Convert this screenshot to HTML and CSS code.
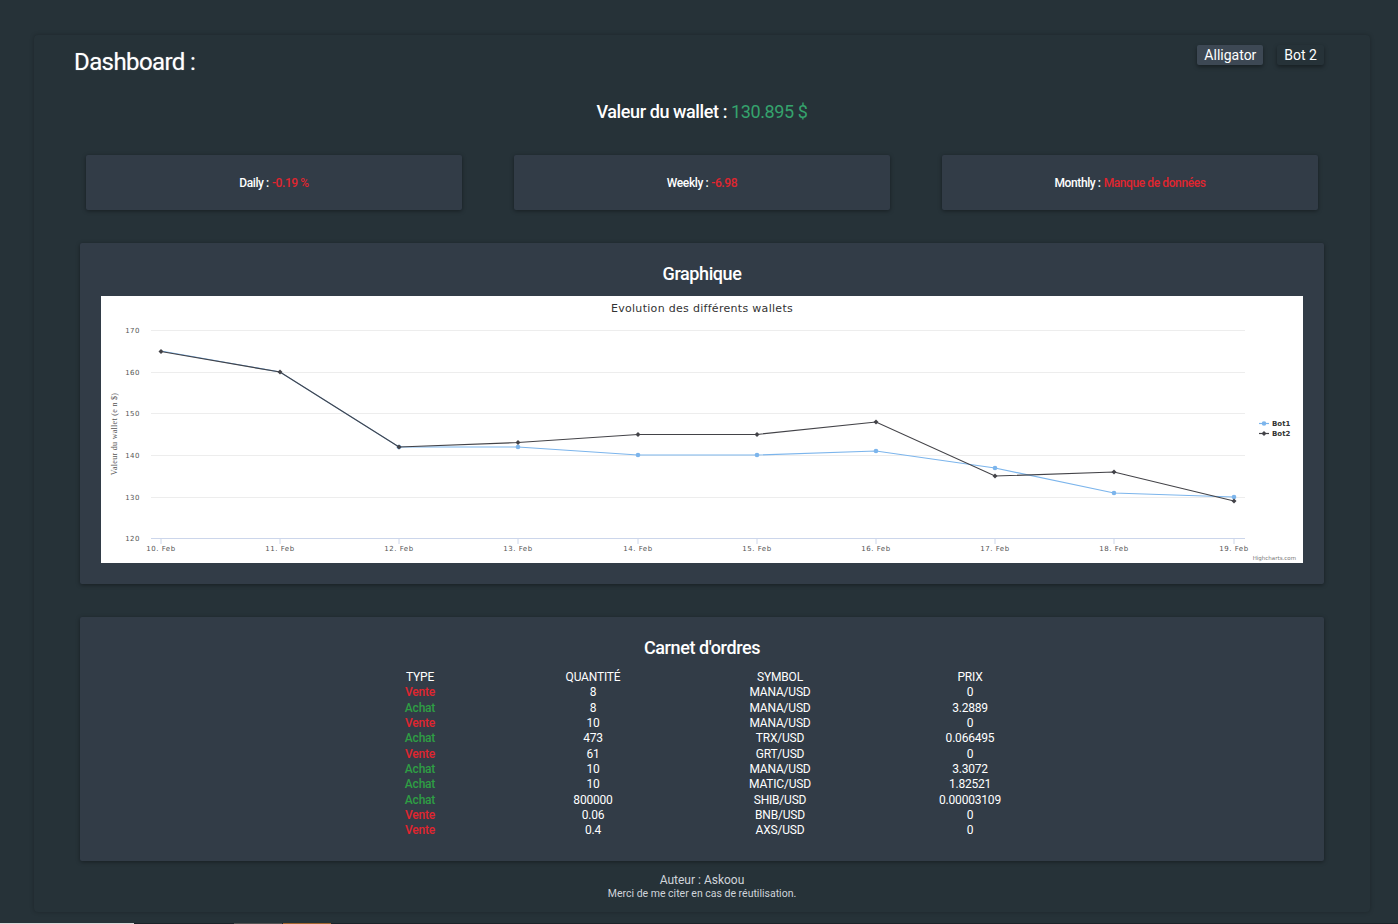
FILE: index.html
```html
<!DOCTYPE html>
<html lang="fr">
<head>
  <meta charset="UTF-8">
  <meta name="viewport" content="width=device-width, initial-scale=1.0">
  <title>Dashboard</title>
  <link rel="stylesheet" href="styles.css">
</head>
<body>

  <div class="page">
    <div class="card">
      <div class="header">
        <h1>Dashboard :</h1>
        <div class="tabs">
          <button class="tab active">Alligator</button>
          <button class="tab">Bot 2</button>
        </div>
      </div>

      <h2 class="wallet">Valeur du wallet : <span class="money">130.895 $</span></h2>

      <div class="stats">
        <div class="stat">Daily : <span class="red">-0.19 %</span></div>
        <div class="stat">Weekly : <span class="red">-6.98</span></div>
        <div class="stat">Monthly : <span class="red">Manque de données</span></div>
      </div>

      <div class="section chart-section">
        <h3>Graphique</h3>
        <svg class="chart" width="1202" height="267" viewBox="0 0 1202 267">
          <rect width="1202" height="267" fill="#fff"/>
          <text class="chart-title" x="601" y="16" text-anchor="middle">Evolution des différents wallets</text>

          <g class="grid">
            <path d="M50 34.500H1144"/>
            <path d="M50 76.500H1144"/>
            <path d="M50 117.500H1144"/>
            <path d="M50 159.500H1144"/>
            <path d="M50 201.500H1144"/>
          </g>
          <path class="axis" d="M50 242.500H1144"/>
          <path class="axis" d="M60 243v5M179 243v5M298 243v5M417 243v5M537 243v5M656 243v5M775 243v5M894 243v5M1013 243v5M1133 243v5"/>

          <g class="ylabels">
            <text x="39" y="37">170</text>
            <text x="39" y="79">160</text>
            <text x="39" y="120">150</text>
            <text x="39" y="162">140</text>
            <text x="39" y="204">130</text>
            <text x="39" y="245">120</text>
          </g>
          <g class="xlabels">
            <text x="60" y="255">10. Feb</text>
            <text x="179" y="255">11. Feb</text>
            <text x="298" y="255">12. Feb</text>
            <text x="417" y="255">13. Feb</text>
            <text x="537" y="255">14. Feb</text>
            <text x="656" y="255">15. Feb</text>
            <text x="775" y="255">16. Feb</text>
            <text x="894" y="255">17. Feb</text>
            <text x="1013" y="255">18. Feb</text>
            <text x="1133" y="255">19. Feb</text>
          </g>
          <text class="ytitle" transform="translate(16 138) rotate(-90)" text-anchor="middle">Valeur du wallet (e n $)</text>

          <polyline class="bot1" points="60,55 179,76 298,151 417,151 537,159 656,159 775,155 894,172 1013,197 1133,201"/>
          <g class="bot1-dots">
            <circle cx="298" cy="151" r="2.300"/><circle cx="417" cy="151" r="2.300"/>
            <circle cx="537" cy="159" r="2.300"/><circle cx="656" cy="159" r="2.300"/>
            <circle cx="775" cy="155" r="2.300"/><circle cx="894" cy="172" r="2.300"/>
            <circle cx="1013" cy="197" r="2.300"/><circle cx="1133" cy="201" r="2.300"/>
          </g>
          <polyline class="bot2" points="60,55.500 179,76 298,151 417,146.500 537,138.500 656,138.500 775,126 894,180 1013,176 1133,205"/>
          <g class="bot2-dots">
            <path d="M60 53l2.500 2.500-2.500 2.500-2.500-2.500z"/><path d="M179 73.500l2.500 2.500-2.500 2.500-2.500-2.500z"/>
            <path d="M298 148.500l2.500 2.500-2.500 2.500-2.500-2.500z"/><path d="M417 144l2.500 2.500-2.500 2.500-2.500-2.500z"/>
            <path d="M537 136l2.500 2.500-2.500 2.500-2.500-2.500z"/><path d="M656 136l2.500 2.500-2.500 2.500-2.500-2.500z"/>
            <path d="M775 123.500l2.500 2.500-2.500 2.500-2.500-2.500z"/><path d="M894 177.500l2.500 2.500-2.500 2.500-2.500-2.500z"/>
            <path d="M1013 173.500l2.500 2.500-2.500 2.500-2.500-2.500z"/><path d="M1133 202.500l2.500 2.500-2.500 2.500-2.500-2.500z"/>
          </g>

          <path class="bot1" d="M1158 127.500h10"/>
          <circle class="bot1-dot" cx="1163" cy="127.500" r="2.300"/>
          <text class="legend" x="1171" y="130">Bot1</text>
          <path class="bot2" d="M1158 137.500h10"/>
          <path class="bot2-dot" d="M1163 135l2.500 2.500-2.500 2.500-2.500-2.500z"/>
          <text class="legend" x="1171" y="140">Bot2</text>

          <text class="credits" x="1195" y="264" text-anchor="end">Highcharts.com</text>
        </svg>
      </div>

      <div class="section orders">
        <h3>Carnet d'ordres</h3>
        <table>
          <thead>
            <tr><th>TYPE</th><th>QUANTITÉ</th><th>SYMBOL</th><th>PRIX</th></tr>
          </thead>
          <tbody>
            <tr><td class="red">Vente</td><td>8</td><td>MANA/USD</td><td>0</td></tr>
            <tr><td class="green">Achat</td><td>8</td><td>MANA/USD</td><td>3.2889</td></tr>
            <tr><td class="red">Vente</td><td>10</td><td>MANA/USD</td><td>0</td></tr>
            <tr><td class="green">Achat</td><td>473</td><td>TRX/USD</td><td>0.066495</td></tr>
            <tr><td class="red">Vente</td><td>61</td><td>GRT/USD</td><td>0</td></tr>
            <tr><td class="green">Achat</td><td>10</td><td>MANA/USD</td><td>3.3072</td></tr>
            <tr><td class="green">Achat</td><td>10</td><td>MATIC/USD</td><td>1.82521</td></tr>
            <tr><td class="green">Achat</td><td>800000</td><td>SHIB/USD</td><td>0.00003109</td></tr>
            <tr><td class="red">Vente</td><td>0.06</td><td>BNB/USD</td><td>0</td></tr>
            <tr><td class="red">Vente</td><td>0.4</td><td>AXS/USD</td><td>0</td></tr>
          </tbody>
        </table>
      </div>

      <div class="footer">
        <div class="author">Auteur : Askoou</div>
        <div class="thanks">Merci de me citer en cas de réutilisation.</div>
      </div>
    </div>

    <div class="strip">
      <span class="strip-light"></span>
      <span class="strip-grey"></span>
      <span class="strip-orange"></span>
    </div>
  </div>

</body>
</html>
```

FILE: styles.css
```css
html, body {
  margin: 0;
  height: 100%;
}
body {
  font-family: Roboto, "Liberation Sans", sans-serif;
  background-color: #263238;
  color: #fff;
  overflow: hidden;
}
.page {
  height: 924px;
  padding-top: 35px;
  box-sizing: border-box;
  display: flex;
  flex-direction: column;
}
.card {
  height: 877px;
  margin: 0 28px 0 34px;
  box-sizing: border-box;
  padding: 10px 46px 0;
  background-color: #263238;
  border-radius: 4px;
  box-shadow: 0 0 4px rgba(0, 0, 0, 0.25);
}
.header {
  display: flex;
  justify-content: space-between;
  align-items: flex-start;
  margin-left: -6px;
}
h1 {
  margin: 3px 0 0;
  font-size: 24px;
  font-weight: 400;
  line-height: 28px;
  letter-spacing: -0.6px;
  text-shadow: 0 0 1px rgba(255, 255, 255, 0.5);
}
.tabs {
  display: flex;
  gap: 14px;
}
.tab {
  height: 20px;
  padding: 0 7px;
  font-family: inherit;
  font-size: 14px;
  color: #fff;
  background-color: #263238;
  border: none;
  border-radius: 2px;
  box-shadow: 0 2px 4px rgba(0, 0, 0, 0.4);
}
.tab.active {
  background-color: #3d4854;
}
.wallet {
  margin: 25px 0 0;
  font-size: 18px;
  font-weight: 500;
  line-height: 22px;
  text-align: center;
  letter-spacing: -0.4px;
}
.money {
  font-weight: 400;
  color: #35a36d;
}
.stats {
  display: flex;
  gap: 52px;
  margin: 32px 6px 0;
}
.stat {
  width: 376px;
  height: 55px;
  display: flex;
  align-items: center;
  justify-content: center;
  gap: 3px;
  font-size: 12px;
  font-weight: 500;
  letter-spacing: -0.4px;
  background-color: #323c47;
  border-radius: 2px;
  box-shadow: 0 1px 4px rgba(0, 0, 0, 0.4);
}
.red {
  color: #e0252f;
}
.green {
  color: #2e9e44;
}
.section {
  background-color: #323c47;
  border-radius: 2px;
  box-shadow: 0 1px 4px rgba(0, 0, 0, 0.4);
}
.section h3 {
  margin: 0;
  font-size: 18px;
  font-weight: 500;
  line-height: 22px;
  letter-spacing: -0.4px;
  text-align: center;
}
.chart-section {
  height: 341px;
  margin-top: 33px;
  padding: 20px 21px 0;
  box-sizing: border-box;
}
.chart {
  display: block;
  margin-top: 11px;
}
.chart-title {
  font-family: "DejaVu Sans", sans-serif;
  font-size: 11px;
  letter-spacing: 0.3px;
  fill: #333;
}
.grid path {
  stroke: #e6e6e6;
  stroke-width: 1;
  opacity: 0.7;
}
.axis {
  stroke: #ccd6eb;
  stroke-width: 1;
  fill: none;
}
.ylabels text,
.xlabels text {
  font-family: "DejaVu Sans", sans-serif;
  font-size: 7px;
  letter-spacing: 0.5px;
  fill: #555;
}
.ylabels text {
  text-anchor: end;
}
.xlabels text {
  text-anchor: middle;
}
.ytitle {
  font-family: "Liberation Serif", serif;
  font-size: 8px;
  letter-spacing: 0.3px;
  fill: #555;
}
.bot1,
.bot2 {
  fill: none;
  stroke-width: 1.2;
}
.bot1 {
  stroke: #7cb5ec;
}
.bot2 {
  stroke: #434348;
}
.bot1-dots circle,
.bot1-dot {
  fill: #7cb5ec;
}
.bot2-dots path,
.bot2-dot {
  fill: #434348;
}
.legend {
  font-family: "DejaVu Sans", sans-serif;
  font-size: 7px;
  font-weight: 700;
  fill: #333;
}
.credits {
  font-family: "DejaVu Sans", sans-serif;
  font-size: 5.500px;
  fill: #777;
}
.orders {
  height: 244px;
  margin-top: 33px;
  padding-top: 20px;
  box-sizing: border-box;
}
table {
  width: 726px;
  margin: 11px auto 0;
  border-collapse: collapse;
  table-layout: fixed;
  font-size: 12px;
  letter-spacing: -0.2px;
}
th, td {
  padding: 0;
  height: 15.300px;
  line-height: 15px;
  text-align: center;
  font-weight: 400;
}
th:nth-child(1) { width: 162px; }
th:nth-child(2) { width: 184px; }
th:nth-child(3) { width: 190px; }
th:nth-child(4) { width: 190px; }
td.red,
td.green {
  font-weight: 500;
}
.footer {
  margin-top: 13px;
  text-align: center;
  color: #cfd4da;
}
.author {
  font-size: 12px;
  line-height: 13px;
}
.thanks {
  font-size: 10.500px;
  line-height: 13px;
}
.strip {
  margin-top: auto;
  height: 1px;
  display: flex;
  background-color: #1c2329;
}
.strip span {
  display: block;
  height: 1px;
}
.strip-light {
  width: 134px;
  background-color: #d8d8d8;
}
.strip-grey {
  width: 48px;
  margin-left: 100px;
  background-color: #555;
}
.strip-orange {
  width: 48px;
  margin-left: 1px;
  background-color: #a5662e;
}
```
